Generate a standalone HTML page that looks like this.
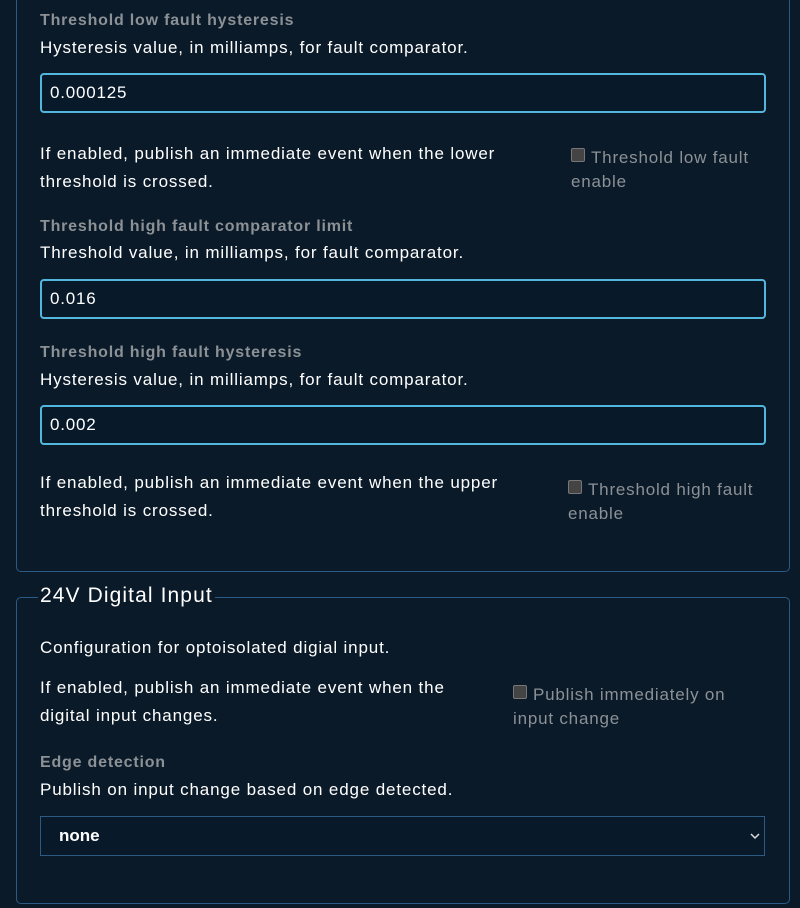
<!DOCTYPE html>
<html><head><meta charset="utf-8"><style>
body{margin:0;width:800px;height:908px;background:#0a1a29;font-family:"Liberation Sans",sans-serif;color:#fff;position:relative;overflow:hidden}
.a{position:absolute;white-space:nowrap}
.lbl{font-weight:bold;color:#8c9196;font-size:16px;letter-spacing:0.8px}
.t{font-size:17px;letter-spacing:0.85px}
.inp{position:absolute;left:40px;width:722px;height:36px;border:2px solid #53b6dc;border-radius:4px;background:#08192a;box-sizing:content-box}
.inp span{position:absolute;left:8px;top:8px;font-size:17px;letter-spacing:0.8px}
.cb{color:#8c9196;font-size:17px;letter-spacing:0.8px;line-height:24px;white-space:normal}
.box{display:inline-block;width:12px;height:12px;border:1px solid #777;background:#444;border-radius:2px;vertical-align:1px;margin-right:6px}
.fs{position:absolute;left:16px;width:772px;border:1px solid #2c5a86;border-radius:5px}
</style></head><body>
<div class="fs" style="top:-10px;height:580px"></div>
<div class="fs" style="top:597px;height:305px"></div>
<div class="a" style="left:38px;top:584px;background:#0a1a29;padding:0 2px;font-size:21px;letter-spacing:1.1px">24V Digital Input</div>

<div class="a lbl" style="left:40px;top:12px">Threshold low fault hysteresis</div>
<div class="a t" style="left:40px;top:38px">Hysteresis value, in milliamps, for fault comparator.</div>
<div class="inp" style="top:73px"><span>0.000125</span></div>
<div class="a t" style="left:40px;top:140px;line-height:28px">If enabled, publish an immediate event when the lower<br>threshold is crossed.</div>
<div class="a cb" style="left:571px;top:146px;width:200px"><span class="box"></span>Threshold low fault enable</div>

<div class="a lbl" style="left:40px;top:218px">Threshold high fault comparator limit</div>
<div class="a t" style="left:40px;top:243px">Threshold value, in milliamps, for fault comparator.</div>
<div class="inp" style="top:279px"><span>0.016</span></div>

<div class="a lbl" style="left:40px;top:344px">Threshold high fault hysteresis</div>
<div class="a t" style="left:40px;top:370px">Hysteresis value, in milliamps, for fault comparator.</div>
<div class="inp" style="top:405px"><span>0.002</span></div>
<div class="a t" style="left:40px;top:469px;line-height:28px">If enabled, publish an immediate event when the upper<br>threshold is crossed.</div>
<div class="a cb" style="left:568px;top:478px;width:200px"><span class="box"></span>Threshold high fault enable</div>

<div class="a t" style="left:40px;top:638px">Configuration for optoisolated digial input.</div>
<div class="a t" style="left:40px;top:674px;line-height:28px">If enabled, publish an immediate event when the<br>digital input changes.</div>
<div class="a cb" style="left:513px;top:683px;width:228px"><span class="box"></span>Publish immediately on input change</div>

<div class="a lbl" style="left:40px;top:754px">Edge detection</div>
<div class="a t" style="left:40px;top:780px">Publish on input change based on edge detected.</div>
<div style="position:absolute;left:40px;top:816px;width:723px;height:38px;border:1px solid #2c5a86;background:#08192a">
<span style="position:absolute;left:18px;top:9px;font-size:17px;font-weight:bold">none</span>
<svg style="position:absolute;right:4px;top:15px" width="10" height="8" viewBox="0 0 10 8"><path d="M1 2 L5 6 L9 2" stroke="#ddd" stroke-width="1.5" fill="none"/></svg>
</div>
</body></html>
